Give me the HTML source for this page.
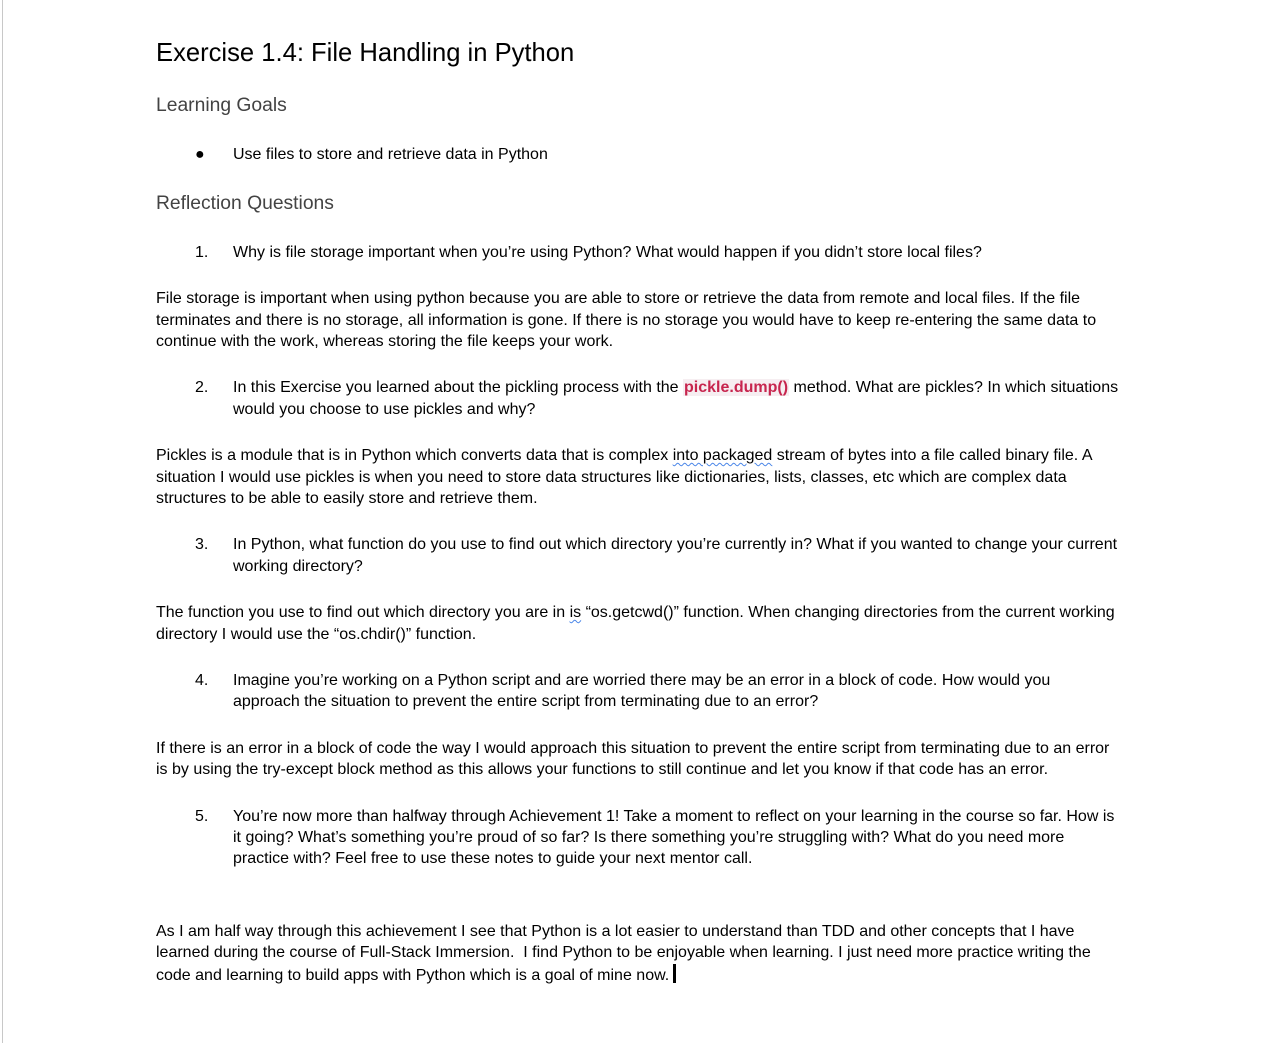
<!DOCTYPE html>
<html><head><meta charset="utf-8"><style>
html,body{margin:0;padding:0;background:#fff;}
body{width:1262px;height:1043px;position:relative;overflow:hidden;font-family:"Liberation Sans",Arial,sans-serif;color:#000;}
.bl{position:absolute;left:2px;top:0;width:1px;height:1043px;background:#c8c8c8;}
.l{position:absolute;white-space:nowrap;font-size:16px;line-height:20px;}
.h1{font-size:25.6px;line-height:30px;}
.h2{font-size:19.3px;line-height:22px;color:#434343;}
.code{color:#c7254e;font-weight:bold;background:#f6eef1;padding:0 1px;}
.sq{text-decoration:underline wavy #4a86e8;text-decoration-thickness:1px;text-underline-offset:2px;}
.cur{display:inline-block;width:3px;height:19px;background:#000;vertical-align:-3px;margin-left:4px;}
</style></head><body>
<div class="bl"></div>
<div class="l h1" style="left:156px;top:38px">Exercise 1.4: File Handling in Python</div>
<div class="l h2" style="left:156px;top:95px">Learning Goals</div>
<div class="l" style="left:195px;top:145px">●</div>
<div class="l" style="left:233px;top:145px">Use files to store and retrieve data in Python</div>
<div class="l h2" style="left:156px;top:193px">Reflection Questions</div>
<div class="l" style="left:195px;top:243px">1.</div>
<div class="l" style="left:233px;top:243px">Why is file storage important when you’re using Python? What would happen if you didn’t store local files?</div>
<div class="l" style="left:156px;top:289px">File storage is important when using python because you are able to store or retrieve the data from remote and local files. If the file</div>
<div class="l" style="left:156px;top:311px">terminates and there is no storage, all information is gone. If there is no storage you would have to keep re-entering the same data to</div>
<div class="l" style="left:156px;top:332px">continue with the work, whereas storing the file keeps your work.</div>
<div class="l" style="left:195px;top:378px">2.</div>
<div class="l" style="left:233px;top:378px">In this Exercise you learned about the pickling process with the <span class="code">pickle.dump()</span> method. What are pickles? In which situations</div>
<div class="l" style="left:233px;top:400px">would you choose to use pickles and why?</div>
<div class="l" style="left:156px;top:446px">Pickles is a module that is in Python which converts data that is complex <span class="sq">into&nbsp;packaged</span> stream of bytes into a file called binary file. A</div>
<div class="l" style="left:156px;top:468px">situation I would use pickles is when you need to store data structures like dictionaries, lists, classes, etc which are complex data</div>
<div class="l" style="left:156px;top:489px">structures to be able to easily store and retrieve them.</div>
<div class="l" style="left:195px;top:535px">3.</div>
<div class="l" style="left:233px;top:535px">In Python, what function do you use to find out which directory you’re currently in? What if you wanted to change your current</div>
<div class="l" style="left:233px;top:557px">working directory?</div>
<div class="l" style="left:156px;top:603px">The function you use to find out which directory you are in <span class="sq">is</span> “os.getcwd()” function. When changing directories from the current working</div>
<div class="l" style="left:156px;top:625px">directory I would use the “os.chdir()” function.</div>
<div class="l" style="left:195px;top:671px">4.</div>
<div class="l" style="left:233px;top:671px">Imagine you’re working on a Python script and are worried there may be an error in a block of code. How would you</div>
<div class="l" style="left:233px;top:692px">approach the situation to prevent the entire script from terminating due to an error?</div>
<div class="l" style="left:156px;top:739px">If there is an error in a block of code the way I would approach this situation to prevent the entire script from terminating due to an error</div>
<div class="l" style="left:156px;top:760px">is by using the try-except block method as this allows your functions to still continue and let you know if that code has an error.</div>
<div class="l" style="left:195px;top:807px">5.</div>
<div class="l" style="left:233px;top:807px">You’re now more than halfway through Achievement 1! Take a moment to reflect on your learning in the course so far. How is</div>
<div class="l" style="left:233px;top:828px">it going? What’s something you’re proud of so far? Is there something you’re struggling with? What do you need more</div>
<div class="l" style="left:233px;top:849px">practice with? Feel free to use these notes to guide your next mentor call.</div>
<div class="l" style="left:156px;top:922px">As I am half way through this achievement I see that Python is a lot easier to understand than TDD and other concepts that I have</div>
<div class="l" style="left:156px;top:943px">learned during the course of Full-Stack Immersion.&nbsp; I find Python to be enjoyable when learning. I just need more practice writing the</div>
<div class="l" style="left:156px;top:964px">code and learning to build apps with Python which is a goal of mine now.<span class="cur"></span></div>
</body></html>
